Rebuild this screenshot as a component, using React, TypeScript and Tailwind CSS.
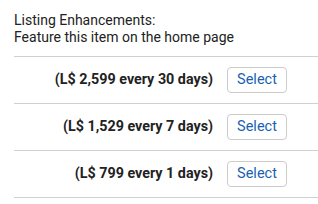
const options = [
  { price: "2,599", days: 30 },
  { price: "1,529", days: 7 },
  { price: "799", days: 1 },
]

export default function App() {
  return (
    <div className="w-[318px] h-[204px] bg-white pl-[14px] pt-[12px] text-[#222] font-['Roboto',sans-serif]">
      <div className="text-[14px] leading-[16.5px] pb-[11px] border-b border-[#d0d0d0]">
        <div>Listing Enhancements:</div>
        <div>Feature this item on the home page</div>
      </div>
      {options.map((o) => (
        <div
          key={o.days}
          className="flex items-center justify-end gap-[14px] h-[47px] pr-[31px] border-b border-[#d0d0d0]"
        >
          <span className="text-[14.3px] font-bold">
            (L$ {o.price} every {o.days} days)
          </span>
          <button className="w-[60px] h-[26px] rounded-[4px] border border-[#cccccc] bg-white text-[14.5px] text-[#1a5fb4]">
            Select
          </button>
        </div>
      ))}
    </div>
  )
}
